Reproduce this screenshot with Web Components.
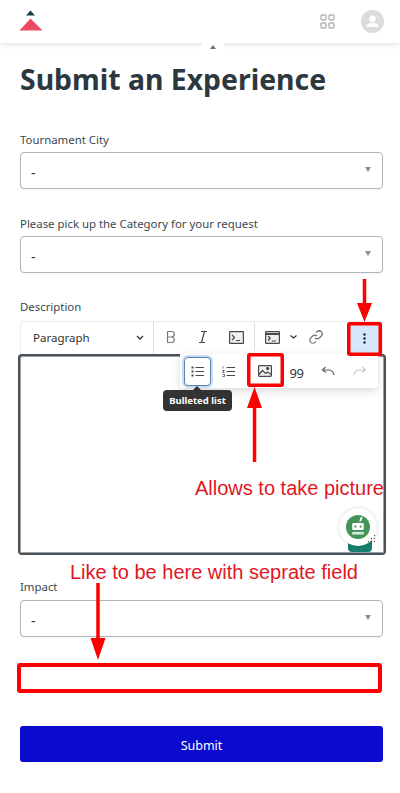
<!DOCTYPE html>
<html lang="en">
<head>
<meta charset="utf-8">
<title>Submit an Experience</title>
<style>
  html, body { margin: 0; background: #fff; }
  body { width: 400px; height: 793px; overflow: hidden; position: relative; font-family: "Noto Sans", "Open Sans", sans-serif; color: #2c3840; }
</style>
</head>
<body>
<top-bar></top-bar>
<experience-form>
  <form-select label="Tournament City" style="height:84px"></form-select>
  <form-select label="Please pick up the Category for your request" style="height:84px"></form-select>
  <rich-editor label="Description"></rich-editor>
  <form-select label="Impact" style="height:147px;--label-lh:16px"></form-select>
  <submit-button>Submit</submit-button>
</experience-form>
<markup-layer></markup-layer>

<script>
class TopBar extends HTMLElement {
  constructor() {
    super();
    this.attachShadow({ mode: "open" }).innerHTML = `
    <style>
      :host { display: flex; align-items: center; justify-content: space-between; height: 43px; padding: 0 16px 0 19px;
        background: #fff; box-shadow: 0 1px 6px rgba(0,0,0,.14); position: relative; z-index: 1; }
      .right { display: flex; align-items: center; gap: 26px; }
      svg { display: block; }
      .handle { position: absolute; left: 202px; top: 43px; width: 22px; height: 9px; background: #fff; border-radius: 0 0 4px 4px; }
      .handle i { position: absolute; left: 8px; top: 2px; border: 3px solid transparent; border-top: 0; border-bottom: 4px solid #6d7479; }
    </style>
    <svg width="24" height="24" viewBox="0 0 24 24">
      <path d="M11.500 .5 L16 5.500 H7 Z" fill="#17424a"/>
      <path d="M11.500 8.500 L23.500 20.500 H.5 Z" fill="#ec4a63"/>
    </svg>
    <div class="right">
      <svg width="15" height="15" viewBox="0 0 15 15" fill="none" stroke="#b5b5b5" stroke-width="1.400">
        <rect x="1" y="1" width="5" height="5" rx="1"/><rect x="9" y="1" width="5" height="5" rx="1"/>
        <rect x="1" y="9" width="5" height="5" rx="1"/><rect x="9" y="9" width="5" height="5" rx="1"/>
      </svg>
      <svg width="23" height="23" viewBox="0 0 23 23">
        <circle cx="11.500" cy="11.500" r="11.500" fill="#dcdcdc"/>
        <circle cx="11.500" cy="8.800" r="3.300" fill="#fff"/>
        <path d="M5.500 17 c0-3 3-4.300 6-4.300 s6 1.300 6 4.300 Z" fill="#fff"/>
      </svg>
    </div>
    <div class="handle"><i></i></div>`;
  }
}

class ExperienceForm extends HTMLElement {
  constructor() {
    super();
    this.attachShadow({ mode: "open" }).innerHTML = `
    <style>
      :host { display: block; padding: 0 17px 0 20px; }
      h1 { margin: 0; height: 88px; padding-top: 14px; box-sizing: border-box; font-size: 28.400px; line-height: 44px; font-weight: 700; color: #2c3840; white-space: nowrap; }
    </style>
    <h1>Submit an Experience</h1>
    <slot></slot>`;
  }
}

class FormSelect extends HTMLElement {
  constructor() {
    super();
    this.attachShadow({ mode: "open" }).innerHTML = `
    <style>
      :host { display: block; font-size: 11.400px; }
      label { display: block; height: 21px; line-height: var(--label-lh, 18px); color: #3b4750; white-space: nowrap; }
      .box { display: flex; justify-content: space-between; height: 37px; box-sizing: border-box; padding: 0 11px 0 10px;
        border: 1px solid #b4b4b4; border-radius: 4px; background: #fff; box-shadow: 0 1px 1px rgba(0,0,0,.04); }
      .val { font-size: 14px; line-height: 39px; color: #2c3840; }
      .arrow { margin-top: 14px; width: 0; height: 0; border: 3.500px solid transparent; border-bottom: 0; border-top: 5px solid #8d8d8d; }
    </style>
    <label></label>
    <div class="box"><span class="val">-</span><span class="arrow"></span></div>`;
    this.shadowRoot.querySelector("label").textContent = this.getAttribute("label");
  }
}

class RichEditor extends HTMLElement {
  constructor() {
    super();
    this.attachShadow({ mode: "open" }).innerHTML = `
    <style>
      :host { display: block; position: relative; font-size: 11.400px; height: 280px; }
      label { display: block; height: 22px; line-height: 16px; color: #3b4750; }
      .bar { display: flex; align-items: center; height: 33px; box-sizing: border-box; padding-bottom: 2px; background: #fff;
        border: 1px solid #ececec; border-bottom: 0; border-radius: 4px 4px 0 0; color: #3c3f42; }
      .para { display: flex; align-items: center; justify-content: space-between; width: 133px; height: 100%; box-sizing: border-box;
        margin-bottom: -2px; padding: 0 9px 2px 12px; height: 32px; font-size: 11.500px; border-right: 1px solid #dcdcdc; color: #333; flex: none; }
      .area { position: absolute; left: -2px; right: -3px; top: 55px; height: 201px; box-sizing: border-box;
        border: 2px solid #4a5157; border-top-width: 3px; outline: 1px solid #9aa0a4; outline-offset: -3px; border-radius: 4px; background: #fff; }
      .btn { width: 27px; height: 28px; display: flex; align-items: center; justify-content: center; flex: none; }
      .sep { width: 1px; height: 28px; background: #dcdcdc; flex: none; }
      .more { position: absolute; left: 328px; top: 23px; width: 33px; height: 32px; background: #d6e6fb; display: flex; align-items: center; justify-content: center; }
      .pop { position: absolute; left: 160px; top: 55px; width: 198px; height: 34px; background: #fff; border-radius: 0 0 4px 4px;
        box-shadow: 0 3px 8px rgba(0,0,0,.15); display: flex; align-items: center; padding-left: 4px; box-sizing: border-box; }
      .on { box-sizing: border-box; width: 27px; height: 29px; border: 1px solid #5e7fa8; border-radius: 4px; box-shadow: 0 0 0 2px #c9dcf7; background: #fff; }
      .tip { position: absolute; left: 143px; top: 91px; width: 69px; height: 21px; border-radius: 4px; background: #333; color: #fff;
        font-size: 9.500px; font-weight: 700; line-height: 21px; text-align: center; white-space: nowrap; }
      .tip:before { content: ""; position: absolute; left: 30px; top: -4px; border: 4px solid transparent; border-top: 0; border-bottom: 4px solid #333; }
      .quote { width: 25px; margin-left: 6px; padding-top: 3px; box-sizing: border-box; font: 400 13px "Noto Sans", sans-serif; color: #33383b; letter-spacing: -.5px; }
      .bot { position: absolute; left: 319px; top: 209px; width: 38px; height: 38px; border-radius: 50%; background: #fff; box-shadow: 0 0 3px rgba(0,0,0,.2); display: flex; align-items: center; justify-content: center; }
      .tab { position: absolute; left: 328px; top: 241px; width: 24px; height: 12px; background: #157f6c; border-radius: 0 0 4px 4px; }
      .grip { position: absolute; left: 347px; top: 235px; }
      svg { display: block; }
      svg.i { fill: none; stroke: #44494d; stroke-width: 1.200; }
    </style>
    <label>Description</label>
    <div class="bar">
      <div class="para"><span>Paragraph</span>
        <svg width="8" height="5" viewBox="0 0 8 5" fill="none" stroke="#333" stroke-width="1.300"><path d="M1 1l3 3 3-3"/></svg></div>
      <div class="btn" style="margin-left:3.500px"><svg class="i" width="14" height="14" viewBox="0 0 14 14" stroke-width="1.600" style="stroke:#75797c"><path d="M3.500 1.500v11M3.500 1.500h4a2.700 2.700 0 0 1 0 5.500h-4M7.500 7h.5a2.800 2.800 0 0 1 0 5.500H3.500"/></svg></div>
      <div class="btn" style="margin-left:5px"><svg class="i" width="14" height="14" viewBox="0 0 14 14" stroke-width="1.500"><path d="M5 1.500h6M3 12.500h6M8.500 1.500l-3 11"/></svg></div>
      <div class="btn" style="margin-left:6px"><svg class="i" width="15" height="13" viewBox="0 0 15 13"><rect x=".6" y=".6" width="13.800" height="11.800" rx=".6" fill="#f0f0f0"/><path d="M3 4l2.500 2.500L3 9M7 9.500h4"/></svg></div>
      <div class="sep" style="margin-left:4px"></div>
      <div class="btn" style="width:22px;margin-left:6.500px"><svg class="i" width="15" height="13" viewBox="0 0 15 13"><rect x=".6" y=".6" width="13.800" height="11.800" rx=".6" fill="#eee"/><path d="M.6 3h13.800" stroke-width="2"/><path d="M3 5l2.300 2.200L3 9.500M7 10h4"/></svg></div>
      <svg width="7" height="4" viewBox="0 0 7 4" fill="none" stroke="#333" stroke-width="1.200" style="margin-left:6.500px;flex:none"><path d="M.5.500l3 2.500 3-2.500"/></svg>
      <div class="btn" style="margin-left:6px"><svg class="i" width="14" height="14" viewBox="0 0 14 14" stroke-width="1.300" style="stroke:#6d7276"><path d="M6 8a3 3 0 0 0 4.300 0l2-2a3 3 0 0 0-4.300-4.300L7 2.700M8 6a3 3 0 0 0-4.300 0l-2 2A3 3 0 0 0 6 12.300l1-1"/></svg></div>
    </div>
    <div class="more"><svg width="3" height="11" viewBox="0 0 3 11" fill="#222"><circle cx="1.500" cy="1.500" r="1.200"/><circle cx="1.500" cy="5.500" r="1.200"/><circle cx="1.500" cy="9.500" r="1.200"/></svg></div>
    <div class="area"></div>
    <div class="pop">
      <div class="btn on"><svg class="i" width="13" height="11" viewBox="0 0 13 11"><path d="M4.500 1.500H13M4.500 5.500H13M4.500 9.500H13" /><path d="M.5 1.500h2M.5 5.500h2M.5 9.500h2" stroke-width="2" stroke-dasharray="2 0"/></svg></div>
      <div class="btn" style="margin-left:4px"><svg class="i" width="13" height="11" viewBox="0 0 13 11"><path d="M4.500 1.500H13M4.500 5.500H13M4.500 9.500H13"/><path d="M1 .5v2M.5 4.500h2l-2 2h2M.5 8.500h2v2h-2" stroke-width=".8"/></svg></div>
      <div class="btn" style="margin-left:9px"><svg class="i" width="14" height="12" viewBox="0 0 14 12"><rect x=".6" y=".6" width="12.800" height="10.800" rx=".8" fill="#f2f2f2"/><circle cx="9.700" cy="3.500" r="1" fill="#44494d"/><path d="M1 9.500l3.500-4 3 3 2-1.500 3.500 2.500" /></svg></div>
      <div class="btn quote">99</div>
      <div class="btn" style="margin-left:5px"><svg class="i" width="14" height="10" viewBox="0 0 14 10" stroke-width="1.400" style="stroke:#5f6467"><path d="M4.500 1L1.500 4l3.500 2.500M1.500 4h6c3.500 0 5 2 5.500 5"/></svg></div>
      <div class="btn" style="margin-left:5px"><svg class="i" width="14" height="10" viewBox="0 0 14 10" stroke-width="1.400" style="stroke:#c4c7c9"><path d="M9.500 1l3 3L9 6.500M12.500 4h-6C3 4 1.500 6 1 9"/></svg></div>
    </div>
    <div class="tip">Bulleted list</div>
    <div class="tab"></div>
    <div class="bot">
      <svg width="24" height="24" viewBox="0 0 27 27">
        <circle cx="13.500" cy="13.500" r="13.500" fill="#43935a"/>
        <path d="M16 3l3-1-2 5-2 .5z" fill="#fff"/>
        <rect x="7" y="9" width="13" height="8" rx="1.500" fill="#fff"/>
        <circle cx="10.500" cy="13" r="1.300" fill="#43935a"/><circle cx="16.500" cy="13" r="1.300" fill="#43935a"/>
        <rect x="7" y="19" width="13" height="3" fill="#d7eadc"/>
      </svg>
    </div>
    <svg class="grip" width="9" height="9" viewBox="0 0 9 9" fill="#555"><circle cx="7.500" cy="1.500" r=".7"/><circle cx="4.500" cy="4.500" r=".7"/><circle cx="7.500" cy="4.500" r=".7"/><circle cx="1.500" cy="7.500" r=".7"/><circle cx="4.500" cy="7.500" r=".7"/><circle cx="7.500" cy="7.500" r=".7"/></svg>`;
  }
}

class SubmitButton extends HTMLElement {
  constructor() {
    super();
    this.attachShadow({ mode: "open" }).innerHTML = `
    <style>
      :host { display: block; height: 36px; border-radius: 3px; background: #0b0bcf; color: #fff; font-size: 12.500px; line-height: 39px; text-align: center; font-weight: 400; }
    </style>
    <slot></slot>`;
  }
}

// red review scribbles that sit on top of the screenshot
class MarkupLayer extends HTMLElement {
  constructor() {
    super();
    this.attachShadow({ mode: "open" }).innerHTML = `
    <style>
      :host { display: block; position: absolute; left: 0; top: 0; width: 400px; height: 793px; pointer-events: none; z-index: 2; }
      svg { position: absolute; left: 0; top: 0; }
      span { position: absolute; font: 20px/24px "Liberation Sans", Arial, sans-serif; color: #e2161f; white-space: nowrap; }
    </style>
    <svg width="400" height="793" viewBox="0 0 400 793" fill="none" stroke="#ff0000">
      <rect x="348.750" y="323.750" width="31.500" height="30.500" stroke-width="3.500" rx="1"/>
      <rect x="248.750" y="354.750" width="33.500" height="30.500" stroke-width="3.500" rx="1"/>
      <rect x="19" y="665" width="361" height="26" stroke-width="4" rx="1"/>
      <path d="M364.500 279v26M254.500 462v-56M98 583v56" stroke-width="3.500"/>
      <path d="M357 303h15l-7.500 19zM247 408h15l-7.500-21zM90.500 638h15l-7.500 22z" fill="#ff0000" stroke="none"/>
    </svg>
    <span style="left:195px;top:476px">Allows to take picture</span>
    <span style="left:70px;top:560px">Like to be here with seprate field</span>`;
  }
}

customElements.define("top-bar", TopBar);
customElements.define("experience-form", ExperienceForm);
customElements.define("form-select", FormSelect);
customElements.define("rich-editor", RichEditor);
customElements.define("submit-button", SubmitButton);
customElements.define("markup-layer", MarkupLayer);
</script>
</body>
</html>
